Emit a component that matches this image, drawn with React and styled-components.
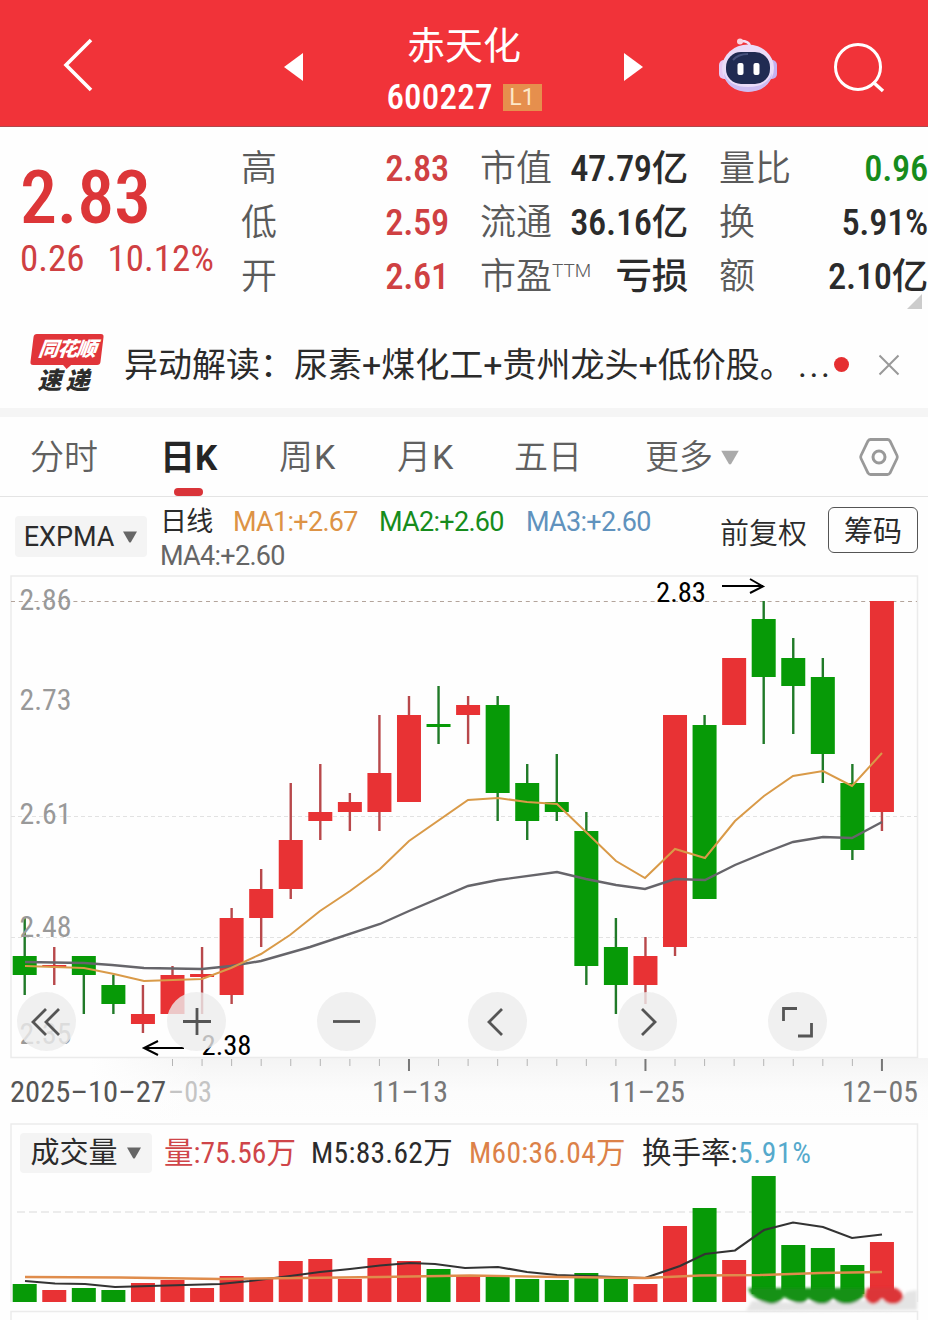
import React from 'react'
import styled, {createGlobalStyle} from 'styled-components'

const GlobalStyle = createGlobalStyle`
  * { box-sizing: border-box; }
  body {
    margin: 0;
    background: #fff;
    color: #2b2b2b;
    font-family: Roboto, "Noto Sans CJK SC", sans-serif;
  }
  svg { display: block; flex: none; }
`
const Page = styled.div`
  width: 928px;
  height: 1320px;
  overflow: hidden;
  background: #fefefe;
`

/* header */
const Header = styled.header`
  height: 127px;
  padding-left: 60px;
  display: flex;
  align-items: center;
  background: #f13339;
  border-bottom: 1px solid #b0484c;
  color: #fff;
`
const HeaderIcon = styled.svg`
  margin-left: ${p => p.$gap || 0}px;
  margin-top: ${p => p.$drop || 0}px;
`
const TitleBlock = styled.div`
  width: 320px;
  height: 100%;
  padding-top: 21px;
  display: flex;
  flex-direction: column;
  align-items: center;
`
const StockName = styled.div`
  font-size: 38px;
  line-height: 50px;
`
const CodeRow = styled.div`
  display: flex;
  align-items: center;
  height: 52px;
  gap: 10px;
  font-size: 35px;
  font-stretch: 75%;
  font-weight: 500;
  letter-spacing: 0.2px;
`
const LevelTag = styled.span`
  width: 39px;
  height: 27px;
  line-height: 28px;
  text-align: center;
  font-size: 23px;
  font-weight: 400;
  font-stretch: 100%;
  background: #e68f4d;
  color: #fde8c8;
`

/* quote */
const Quote = styled.section`
  height: 186px;
  padding-top: 15px;
  display: flex;
`
const PriceBlock = styled.div`
  width: 241px;
  padding: 17px 0 0 20px;
  font-stretch: 75%;
  color: #dc3638;
`
const Price = styled.div`
  font-size: 74px;
  font-weight: 500;
  line-height: 78px;
  letter-spacing: -0.2px;
`
const Change = styled.div`
  display: flex;
  gap: 23px;
  font-size: 37px;
  line-height: 44px;
  letter-spacing: 0;
  color: #cf4042;
`
const StatColumn = styled.div`
  width: ${p => p.$width}px;
  margin-right: ${p => p.$gap || 0}px;
`
const Stat = styled.div`
  height: 54px;
  display: flex;
  align-items: center;
  justify-content: space-between;
  white-space: nowrap;
`
const StatLabel = styled.span`
  font-size: 36px;
  line-height: 54px;
  font-weight: 350;
  color: #5a5a5a;
  sup {
    font-size: 19px;
    line-height: 0;
    vertical-align: 12px;
    font-weight: 300;
  }
`
const StatValue = styled.span`
  font-size: 36.5px;
  line-height: 54px;
  font-weight: 500;
  font-stretch: 75%;
  letter-spacing: -0.3px;
  color: ${p => p.$color || '#2b2b2b'};
`
const Corner = styled.svg`
  margin: -10px 6px 0 auto;
`

/* news */
const News = styled.section`
  height: 95px;
  display: flex;
  align-items: center;
  padding-left: 29px;
  padding-top: 8px;
`
const NewsLogo = styled.div`
  width: 75px;
  height: 62px;
  margin-right: 20px;
  text-align: center;
  font-weight: 900;
  font-style: italic;
`
const LogoTop = styled.div`
  position: relative;
  width: 70px;
  height: 31px;
  margin-left: 3px;
  border-radius: 3px;
  transform: skewX(-7deg);
  background: #e1353a;
  color: #fff;
  font-size: 20px;
  line-height: 30px;
  letter-spacing: -1px;
  &::after {
    content: '';
    position: absolute;
    left: 32px;
    top: 30px;
    border: 5px solid transparent;
    border-top-color: #e1353a;
    border-bottom-width: 0;
  }
`
const LogoBottom = styled.div`
  font-size: 24px;
  line-height: 32px;
  letter-spacing: 4px;
  padding-right: 2px;
  color: #2d2d2d;
`
const NewsText = styled.div`
  width: 707px;
  font-size: 34px;
  line-height: 50px;
  padding-top: 1px;
  white-space: nowrap;
`
const Ellipsis = styled.span`
  margin-left: 4px;
  letter-spacing: 2.6px;
`
const NewsDot = styled.span`
  width: 15px;
  height: 15px;
  border-radius: 50%;
  margin-left: 3px;
  margin-right: 29px;
  background: #e52f31;
`

/* tabs */
const Tabs = styled.nav`
  height: 89px;
  border-top: 9px solid #f5f5f5;
  border-bottom: 1px solid #e4e4e4;
  padding-left: 30px;
  display: flex;
  align-items: center;
`
const Tab = styled.div`
  position: relative;
  height: 79px;
  line-height: 80px;
  width: ${p => p.$width}px;
  padding-top: ${p => p.$active ? 4 : 1}px;
  font-size: ${p => p.$active ? 35 : 34}px;
  font-weight: ${p => p.$active ? 700 : 350};
  color: ${p => p.$active ? '#252525' : '#606060'};
  display: flex;
  align-items: center;
  svg { margin-left: 7px; }
  &::after {
    content: '';
    display: ${p => p.$active ? 'block' : 'none'};
    position: absolute;
    left: 14px;
    bottom: 0;
    width: 29px;
    height: 8px;
    border-radius: 4px;
    background: #d93439;
  }
`
const TabK = styled.span`
  font-weight: ${p => p.$active ? 700 : 400};
  margin-left: ${p => p.$active ? 0 : 1}px;
`

/* indicator bar */
const Indicators = styled.section`
  height: 78px;
  padding: 9px 10px 0 15px;
  display: flex;
`
const Picker = styled.div`
  width: 132px;
  height: ${p => p.$height || 41}px;
  margin-top: ${p => p.$drop || 0}px;
  border-radius: 4px;
  background: #f4f4f4;
  display: flex;
  align-items: center;
  justify-content: center;
  gap: 8px;
  font-size: ${p => p.$size || 27}px;
  line-height: 40px;
`
const MaBlock = styled.div`
  width: 560px;
  margin-left: 13px;
  margin-top: -1px;
`
const MaRow = styled.div`
  display: flex;
  height: 34px;
  line-height: 34px;
  font-size: 27px;
  letter-spacing: -0.7px;
  white-space: nowrap;
`
const Ma = styled.span`
  width: ${p => p.$width}px;
  color: ${p => p.$color};
`
const Adjust = styled.div`
  width: 108px;
  font-size: 29px;
  line-height: 56px;
  font-weight: 350;
`
const ChipButton = styled.div`
  width: 90px;
  height: 46px;
  border: 1.5px solid #555;
  border-radius: 6px;
  text-align: center;
  font-size: 29px;
  line-height: 49px;
  margin-top: 1px;
`

/* charts */
const ChartArea = styled.section`
  position: relative;
  height: 548px;
`
const Controls = styled.div`
  position: absolute;
  left: 17px;
  top: 417px;
  display: flex;
  gap: 91.2px;
`
const Control = styled.div`
  width: 59px;
  height: 59px;
  border-radius: 50%;
  background: rgba(236, 236, 236, 0.8);
`
const VolumeArea = styled.section`
  height: 197px;
  position: relative;
`
const VolumeHead = styled.div`
  position: absolute;
  left: 20px;
  top: 9px;
  display: flex;
  align-items: center;
`
const VolumeText = styled.span`
  width: ${p => p.$width}px;
  color: ${p => p.$color || '#2b2b2b'};
  font-size: 29.5px;
  font-stretch: 75%;
  line-height: 42px;
  letter-spacing: ${p => p.$ls}px;
  white-space: nowrap;
`

const RED = '#e83234'
const GREEN = '#079a07'

const px = i => 24.7 + i * 29.56

// colour, high, body top, body bottom, low, top of volume bar
const candles = [
    ['g', 918, 956, 975, 995, 1284],
    ['r', 947, 965, 967, 985, 1290],
    ['g', 956, 956, 975, 1014, 1288],
    ['g', 975, 985, 1004, 1014, 1290],
    ['r', 985, 1014, 1024, 1033, 1283],
    ['r', 966, 975, 1014, 1014, 1280],
    ['r', 947, 974, 977, 1014, 1288],
    ['r', 908, 918, 995, 1004, 1276],
    ['r', 869, 889, 918, 947, 1278],
    ['r', 783, 840, 889, 899, 1261],
    ['r', 764, 812, 821, 840, 1259],
    ['r', 793, 802, 812, 831, 1279],
    ['r', 715, 773, 812, 831, 1258],
    ['r', 696, 715, 802, 802, 1261],
    ['g', 686, 724, 727, 744, 1269],
    ['r', 696, 705, 715, 744, 1276],
    ['g', 696, 705, 793, 821, 1276],
    ['g', 764, 783, 821, 840, 1279],
    ['g', 754, 802, 812, 821, 1280],
    ['g', 812, 831, 966, 985, 1273],
    ['g', 918, 947, 985, 1014, 1279],
    ['r', 937, 956, 985, 1004, 1284],
    ['r', 715, 715, 947, 956, 1226],
    ['g', 715, 725, 899, 899, 1208],
    ['r', 658, 658, 725, 725, 1260],
    ['g', 601, 619, 677, 744, 1176],
    ['g', 638, 658, 686, 734, 1245],
    ['g', 658, 677, 754, 783, 1248],
    ['g', 764, 783, 850, 860, 1265],
    ['r', 601, 601, 812, 831, 1242],
]

const fast = '25,966 84,968 114,974 144,981 202,979 231,968 261,954 290,935 320,911 350,891 380,869 409,841 468,800 498,798 527,802 557,804 586,832 616,861 645,878 675,849 705,858 735,821 764,796 793,776 823,771 852,786 882,753'
const slow = '25,962 84,963 112,965 144,968 202,969 231,966 261,961 310,947 380,924 409,911 468,886 498,880 557,872 586,879 616,885 645,889 675,879 705,880 735,865 764,853 793,842 823,837 852,838 882,822'
const volM5 = '25,1281 55,1283.5 85,1284 115,1287 150,1286 220,1284 250,1281 290,1276 320,1272 350,1269 380,1265.5 410,1263 435,1264 465,1268 498,1267 527,1272 557,1275 616,1277 645,1278 680,1266 705,1254 735,1250.5 764,1230 793,1222.5 823,1227 852,1238 882,1234.5'
const volM60 = '25,1277 120,1277.5 220,1279 300,1278 380,1277 470,1275.5 560,1277 645,1278 700,1275.5 760,1275 820,1273 882,1272'

const levels = [['2.86', 610], ['2.73', 710], ['2.61', 824], ['2.48', 937], ['2.35', 1044]]
const dates = [['2025–10–27', 10, 156, '#555'], ['11–13', 372, 76, '#777'], ['11–25', 608, 77, '#777'], ['12–05', 842, 76, '#777']]

const Triangle = ({w = 16, h = 12, color = '#666'}) => (
    <svg width={w} height={h} viewBox="0 0 16 12">
        <path d="M1 0.5h14L9 11q-1 1-2 0z" fill={color} />
    </svg>
)

const Robot = () => (
    <HeaderIcon $gap={74} $drop={4} width="60" height="56" viewBox="0 0 60 56">
        <path d="M32 9q-1-5-9-5" fill="none" stroke="#f4dff6" strokeWidth="2.4" />
        <circle cx="22" cy="4.500" r="3" fill="#fbd3df" />
        <rect x="1" y="23" width="11" height="19" rx="5" fill="#e6c9f3" />
        <rect x="48" y="23" width="11" height="19" rx="5" fill="#c5b2f0" />
        <ellipse cx="30" cy="31" rx="26" ry="23.5" fill="#eadcf8" />
        <path d="M6 36a24 19 0 0 0 48 0q-5 14-24 14T6 36z" fill="#cdbdf2" />
        <rect x="8" y="15" width="44" height="32" rx="15" fill="#202b52" />
        <path d="M15 23q5-6 15-6" fill="none" stroke="#46517c" strokeWidth="2" />
        <rect x="19.500" y="26" width="6" height="12" rx="2" fill="#fff" />
        <rect x="35.500" y="26" width="6" height="12" rx="2" fill="#fff" />
    </HeaderIcon>
)

const PriceChart = () => (
    <svg width="928" height="548" viewBox="0 575 928 548">
        <defs>
            <linearGradient id="axis" x1="0" y1="0" x2="0" y2="1">
                <stop offset="0" stopColor="#f4f4f4" />
                <stop offset="0.55" stopColor="#fcfcfc" />
                <stop offset="1" stopColor="#fdfdfd" />
            </linearGradient>
            <linearGradient id="edge">
                <stop offset="0" stopColor="#fefefe" />
                <stop offset="1" stopColor="#fefefe" stopOpacity="0" />
            </linearGradient>
        </defs>
        <rect x="90" y="1058" width="838" height="62" fill="url(#axis)" />
        <rect x="90" y="1058" width="120" height="62" fill="url(#edge)" />
        <path d="M11 1057.5V576H917.500V1057.500z" fill="none" stroke="#ebebeb" strokeWidth="1.500" />
        <path d="M11 601.500H917" stroke="#b3a49b" strokeDasharray="4 3.800" />
        <path d="M11 816.500H917M11 937.500H917" stroke="#e2e2e2" strokeDasharray="4 3" />
        {candles.map((c, i) => (
            <g key={i} fill={c[0] === 'r' ? RED : GREEN}>
                <rect x={px(i) - 1.2} y={c[1]} width="2.4" height={c[4] - c[1]} fill={c[0] === 'r' ? '#b8484b' : '#207a28'} />
                <rect x={px(i) - 12} y={c[2]} width="24" height={c[3] - c[2]} />
            </g>
        ))}
        <g fill="#999" fontSize="29" fontStretch="75%">
            {levels.map(l => (
                <text key={l[0]} x="19.500" y={l[1]} textLength="52" lengthAdjust="spacingAndGlyphs">{l[0]}</text>
            ))}
        </g>
        <polyline points={slow} fill="none" stroke="#66656a" strokeWidth="2.400" />
        <polyline points={fast} fill="none" stroke="#d99a48" strokeWidth="2" />
        <g fontSize="27" fill="#000" fontStretch="75%">
            <text x="656" y="601.500" textLength="50" lengthAdjust="spacingAndGlyphs">2.83</text>
            <text x="201.500" y="1054.500" textLength="50" lengthAdjust="spacingAndGlyphs">2.38</text>
        </g>
        <path d="M722 586H763M750 579L763 586.500L750 593M184 1048H144M158 1041L144 1048L158 1055" fill="none" stroke="#000" strokeWidth="2" />
        {candles.map((c, i) => {
            const major = i === 13 || i === 21 || i === 29
            if (i < 5) return null
            return <rect key={i} x={px(i) - (major ? 1 : 0.5)} y="1059" width={major ? 2 : 1} height={major ? 12 : 7} fill={major ? '#777' : '#b5b5b5'} />
        })}
        <g fontSize="29" fontStretch="75%">
            <text x="168" y="1102" textLength="44" lengthAdjust="spacingAndGlyphs" fill="#c4c4c4">–03</text>
            {dates.map(d => (
                <text key={d[0]} x={d[1]} y="1102" textLength={d[2]} lengthAdjust="spacingAndGlyphs" fill={d[3]}>{d[0]}</text>
            ))}
        </g>
    </svg>
)

const VolumeChart = () => (
    <svg width="928" height="197" viewBox="0 1123 928 197">
        <defs>
            <filter id="soft"><feGaussianBlur stdDeviation="1.800" /></filter>
        </defs>
        <path d="M11 1302V1124H917.500V1302M11 1320V1311.500H917.500V1320" fill="none" stroke="#ebebeb" strokeWidth="1.500" />
        <path d="M17 1212H914" stroke="#e6e6e6" strokeWidth="1.500" strokeDasharray="8 4" />
        {candles.map((c, i) => (
            <rect key={i} x={px(i) - 12} y={c[5]} width="24" height={(i > 24 ? 1294 : 1302) - c[5]} fill={c[0] === 'r' ? RED : GREEN} />
        ))}
        <polyline points={volM5} fill="none" stroke="#333" strokeWidth="2.200" />
        <polyline points={volM60} fill="none" stroke="#df8c4c" strokeWidth="2.400" />
        <g filter="url(#soft)">
            <path d="M746 1311L752 1301L800 1303L902 1299L906 1292L917 1290V1310z" fill="#e4e4e4" />
            <path d="M748 1288H864V1296Q856 1304 847 1304T833 1298Q829 1304 822 1304T808 1298Q806 1303 800 1303T784 1297Q779 1304 771 1304Q758 1302 750 1293z" fill="#129114" />
            <path d="M867 1288H896Q904 1293 903 1298Q900 1304 893 1304Q886 1304 882 1298Q878 1304 872 1304Q866 1302 865 1296z" fill="#dc3639" />
        </g>
    </svg>
)

const controlIcons = [
    'M29 17L16 30L29 43M42 17L29 30L42 43',
    'M16 29.500H44M30 16V43',
    'M16 29.500H43',
    'M34 17L21 30L34 43',
    'M24 17L37 30L24 43',
    'M15.500 29V16.500H29M43.500 31V44H30',
]

const App = () => {
    return (
        <Page>
            <GlobalStyle />
            <Header>
                <HeaderIcon $drop={4} width="34" height="54" viewBox="0 0 34 54">
                    <path d="M31 2L6 27L31 52" fill="none" stroke="#fff" strokeWidth="3.600" />
                </HeaderIcon>
                <HeaderIcon $gap={190} $drop={8} width="20" height="28" viewBox="0 0 20 28">
                    <path d="M0 14L19 0V28z" fill="#fff" />
                </HeaderIcon>
                <TitleBlock>
                    <StockName>赤天化</StockName>
                    <CodeRow>600227<LevelTag>L1</LevelTag></CodeRow>
                </TitleBlock>
                <HeaderIcon $drop={8} width="20" height="28" viewBox="0 0 20 28">
                    <path d="M0 0V28L19 14z" fill="#fff" />
                </HeaderIcon>
                <Robot />
                <HeaderIcon $gap={55} $drop={8} width="52" height="52" viewBox="0 0 52 52">
                    <circle cx="25" cy="26" r="22.500" fill="none" stroke="#fff" strokeWidth="3" />
                    <path d="M40 41L50 50" stroke="#fff" strokeWidth="3.400" />
                </HeaderIcon>
            </Header>

            <Quote>
                <PriceBlock>
                    <Price>2.83</Price>
                    <Change><span>0.26</span><span>10.12%</span></Change>
                </PriceBlock>
                <StatColumn $width={208} $gap={31}>
                    <Stat><StatLabel>高</StatLabel><StatValue $color="#cf4042">2.83</StatValue></Stat>
                    <Stat><StatLabel>低</StatLabel><StatValue $color="#cf4042">2.59</StatValue></Stat>
                    <Stat><StatLabel>开</StatLabel><StatValue $color="#cf4042">2.61</StatValue></Stat>
                </StatColumn>
                <StatColumn $width={208} $gap={31}>
                    <Stat><StatLabel>市值</StatLabel><StatValue>47.79亿</StatValue></Stat>
                    <Stat><StatLabel>流通</StatLabel><StatValue>36.16亿</StatValue></Stat>
                    <Stat><StatLabel>市盈<sup>TTM</sup></StatLabel><StatValue>亏损</StatValue></Stat>
                </StatColumn>
                <StatColumn $width={209}>
                    <Stat><StatLabel>量比</StatLabel><StatValue $color="#168c1c">0.96</StatValue></Stat>
                    <Stat><StatLabel>换</StatLabel><StatValue>5.91%</StatValue></Stat>
                    <Stat><StatLabel>额</StatLabel><StatValue>2.10亿</StatValue></Stat>
                    <Corner width="15" height="15"><path d="M15 0V15H0z" fill="#ccc" /></Corner>
                </StatColumn>
            </Quote>

            <News>
                <NewsLogo>
                    <LogoTop>同花顺</LogoTop>
                    <LogoBottom>速递</LogoBottom>
                </NewsLogo>
                <NewsText>异动解读：尿素+煤化工+贵州龙头+低价股。<Ellipsis>...</Ellipsis></NewsText>
                <NewsDot />
                <svg width="22" height="22" viewBox="0 0 22 22">
                    <path d="M1.500 1.500L20.500 20.500M20.500 1.500L1.500 20.500" stroke="#999" strokeWidth="2" />
                </svg>
            </News>

            <Tabs>
                <Tab $width={130}>分时</Tab>
                <Tab $width={119} $active>日<TabK $active>K</TabK></Tab>
                <Tab $width={118}>周<TabK>K</TabK></Tab>
                <Tab $width={117}>月<TabK>K</TabK></Tab>
                <Tab $width={131}>五日</Tab>
                <Tab $width={213}>更多<Triangle w={20} h={17} color="#aaa" /></Tab>
                <svg width="42" height="40" viewBox="0 0 42 40">
                    <path d="M12.500 2.500H29.500Q31 2.500 32 4L39 18.500Q39.700 20 39 21.500L32 36Q31 37.500 29.500 37.500H12.500Q11 37.500 10 36L3 21.500Q2.300 20 3 18.500L10 4Q11 2.500 12.500 2.500z" fill="none" stroke="#999" strokeWidth="2.800" />
                    <circle cx="21" cy="20" r="6" fill="none" stroke="#999" strokeWidth="3" />
                </svg>
            </Tabs>

            <Indicators>
                <Picker $drop={10}>EXPMA<Triangle /></Picker>
                <MaBlock>
                    <MaRow>
                        <Ma $width={73}>日线</Ma>
                        <Ma $width={146} $color="#dd9345">MA1:+2.67</Ma>
                        <Ma $width={147} $color="#168c1c">MA2:+2.60</Ma>
                        <Ma $width={147} $color="#6092bd">MA3:+2.60</Ma>
                    </MaRow>
                    <MaRow><Ma $color="#666">MA4:+2.60</Ma></MaRow>
                </MaBlock>
                <Adjust>前复权</Adjust>
                <ChipButton>筹码</ChipButton>
            </Indicators>

            <ChartArea>
                <PriceChart />
                <Controls>
                    {controlIcons.map(d => (
                        <Control key={d}>
                            <svg width="59" height="59" viewBox="0 0 59 59">
                                <path d={d} fill="none" stroke="#555" strokeWidth="2.800" />
                            </svg>
                        </Control>
                    ))}
                </Controls>
            </ChartArea>

            <VolumeArea>
                <VolumeChart />
                <VolumeHead>
                    <Picker $height={40} $size={29}>成交量<Triangle /></Picker>
                    <VolumeText $width={12} />
                    <VolumeText $width={147} $ls={0}>
                        <Ma $color="#cf4549">量:75.56万</Ma>
                    </VolumeText>
                    <VolumeText $width={158} $ls={0.3}>M5:83.62万</VolumeText>
                    <VolumeText $width={173} $ls={0.3} $color="#dc8148">M60:36.04万</VolumeText>
                    <VolumeText $width={96} $ls={0}>换手率:</VolumeText>
                    <VolumeText $width={80} $ls={0.7} $color="#55a9cc">5.91%</VolumeText>
                </VolumeHead>
            </VolumeArea>
        </Page>
    )
}

export default App
